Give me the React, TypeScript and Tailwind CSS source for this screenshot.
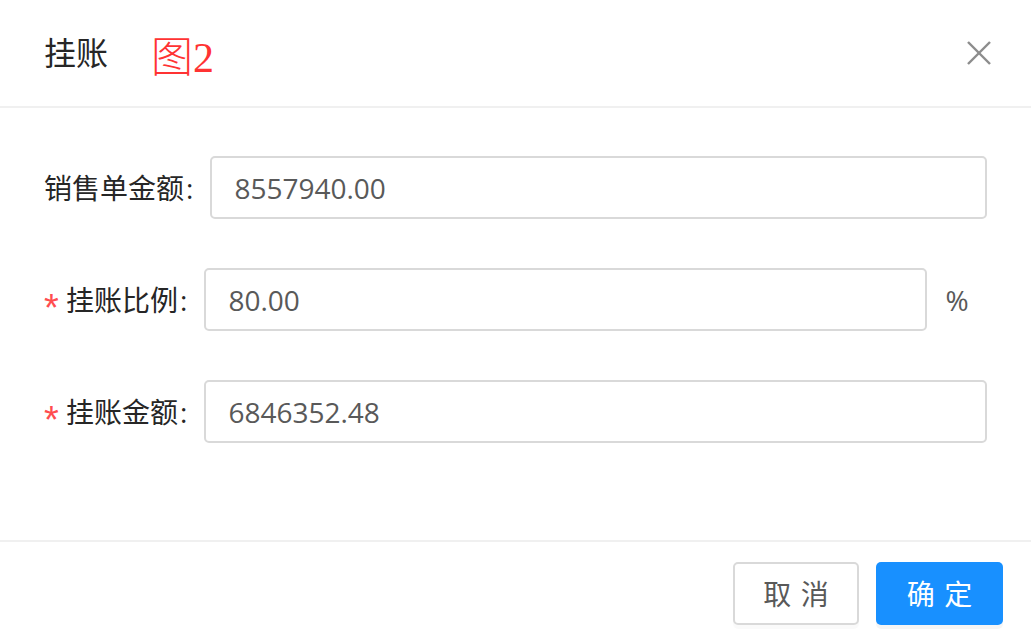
import React from 'react';

const font = "[font-family:'Open_Sans','Noto_Sans_CJK_SC',sans-serif]";

const Label: React.FC<{ text: string; required?: boolean }> = ({ text, required }) => (
  <div className="flex items-center shrink-0 text-[28px] text-[#262626]">
    {required && (
      <span className="w-[14px] mr-[8px] text-[#ff4d4f] text-[38px] leading-none translate-y-[8px] [font-family:'Liberation_Sans',sans-serif]">
        *
      </span>
    )}
    <span>{text}</span>
    <span className="ml-[2px] mr-[17px]">:</span>
  </div>
);

const Field: React.FC<{ value: string }> = ({ value }) => (
  <div className="flex-1 h-[63px] border-2 border-[#d9d9d9] rounded-[5px] flex items-center px-[22px] text-[28px] text-[#595959]">
    {value}
  </div>
);

const App: React.FC = () => {
  return (
    <div className={`w-[1031px] h-[642px] bg-white flex flex-col ${font}`}>
      {/* header */}
      <div className="h-[108px] border-b-2 border-[#f0f0f0] flex items-center pl-[44px] pr-[40px]">
        <span className="text-[32px] text-[#262626] leading-none">挂账</span>
        <span className="ml-[43px] mt-[10px] text-[42px] leading-none text-[#ff3333] font-light [font-family:'Liberation_Serif','Noto_Sans_CJK_SC',serif]">
          图2
        </span>
        <button className="ml-auto w-[24px] h-[24px] flex items-center justify-center">
          <svg width="24" height="24" viewBox="0 0 24 24" fill="none" stroke="#8c8c8c" strokeWidth="2.4">
            <line x1="1" y1="1" x2="23" y2="23" />
            <line x1="23" y1="1" x2="1" y2="23" />
          </svg>
        </button>
      </div>

      {/* body */}
      <div className="flex-1 flex flex-col gap-[49px] pt-[48px] pl-[44px] pr-[44px]">
        <div className="flex items-center">
          <Label text="销售单金额" />
          <Field value="8557940.00" />
        </div>
        <div className="flex items-center">
          <Label text="挂账比例" required />
          <Field value="80.00" />
          <div className="w-[60px] text-center text-[28px] text-[#595959]">%</div>
        </div>
        <div className="flex items-center">
          <Label text="挂账金额" required />
          <Field value="6846352.48" />
        </div>
      </div>

      {/* footer */}
      <div className="h-[102px] border-t-2 border-[#f0f0f0] flex justify-end items-start pt-[20px] pr-[28px] gap-[17px]">
        <button className="w-[126px] h-[63px] border-2 border-[#d9d9d9] rounded-[5px] bg-white text-[28px] text-[#595959] shadow-[0_4px_0_rgba(0,0,0,0.02)]">
          <span className="tracking-[0.34em] mr-[-0.34em]">取消</span>
        </button>
        <button className="w-[127px] h-[63px] rounded-[5px] bg-[#1890ff] text-[28px] text-white shadow-[0_4px_0_rgba(0,0,0,0.04)]">
          <span className="tracking-[0.34em] mr-[-0.34em]">确定</span>
        </button>
      </div>
    </div>
  );
};

export default App;
